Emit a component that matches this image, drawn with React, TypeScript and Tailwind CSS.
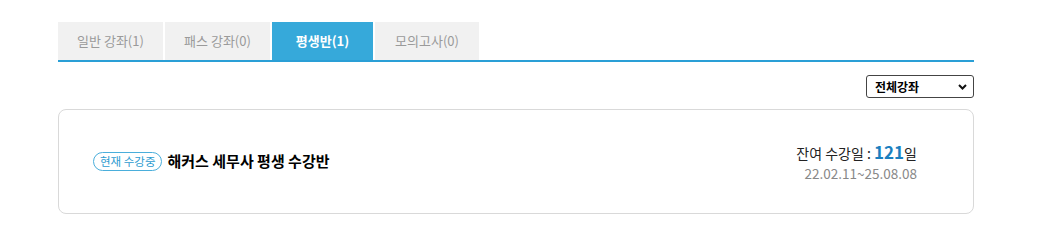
import React from "react";

const tabs = [
  { label: "일반 강좌(1)", active: false, w: "w-[105px]" },
  { label: "패스 강좌(0)", active: false, w: "w-[105px]" },
  { label: "평생반(1)", active: true, w: "w-[101px]" },
  { label: "모의고사(0)", active: false, w: "w-[104px]" },
];

export default function App() {
  return (
    <div
      className="w-[1047px] h-[250px] bg-white pl-[58px] pt-[22px]"
      style={{ fontFamily: '"Noto Sans CJK KR", "Noto Sans", sans-serif' }}
    >
      <div className="w-[916px]">
        <div className="flex gap-[2px] border-b-2 border-[#2a9fd6]">
          {tabs.map((t) => (
            <div
              key={t.label}
              className={
                t.active
                  ? `${t.w} h-[38px] flex items-center justify-center bg-[#36a9da] text-white text-[13px] font-bold`
                  : `${t.w} h-[38px] flex items-center justify-center bg-[#f1f1f1] text-[#9a9a9a] text-[13px]`
              }
            >
              {t.label}
            </div>
          ))}
        </div>
        <div className="flex justify-end mt-[13px]">
          <div className="w-[108px] h-[23px] border border-[#444] rounded-[3px] flex items-center justify-between pl-[8px] pr-[6px] text-[12px] font-bold text-black">
            <span>전체강좌</span>
            <svg width="9" height="6" viewBox="0 0 9 6">
              <path d="M1 1l3.5 3.5L8 1" fill="none" stroke="#111" strokeWidth="2" />
            </svg>
          </div>
        </div>
        <div className="mt-[11px] h-[105px] border border-[#d9d9d9] rounded-[8px] flex items-center justify-between pl-[34px] pr-[56px]">
          <div className="flex items-center gap-[5px]">
            <span className="h-[19px] px-[6px] rounded-full border border-[#4aaedb] text-[#2d9bd0] text-[11.5px] flex items-center leading-none">
              현재 수강중
            </span>
            <span className="text-[15px] font-bold text-black">해커스 세무사 평생 수강반</span>
          </div>
          <div className="flex flex-col items-end">
            <div className="text-[14px] text-[#222] flex items-baseline leading-[20px]">
              <span>잔여 수강일 :&nbsp;</span>
              <span className="text-[17px] font-bold text-[#1a7fbf]">121</span>
              <span>일</span>
            </div>
            <div className="text-[13.5px] text-[#888] mt-[1px] leading-[18px]">22.02.11~25.08.08</div>
          </div>
        </div>
      </div>
    </div>
  );
}
